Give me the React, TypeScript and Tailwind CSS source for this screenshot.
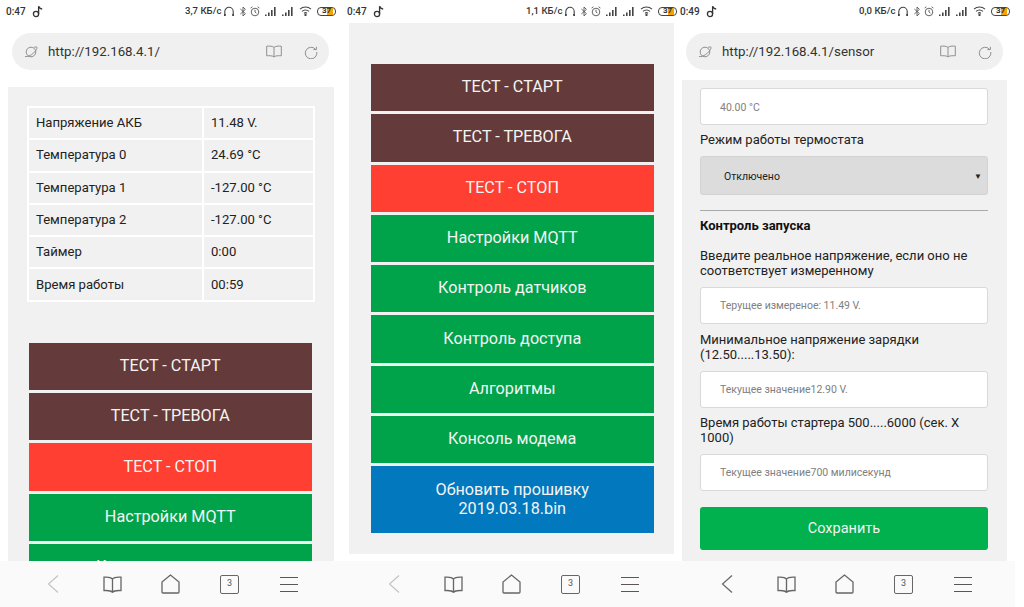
import React from "react";

const Gray = "#8f8f8f";

function Note() {
  return (
    <svg width="12" height="13" viewBox="0 0 12 13" fill="none" stroke="#333" strokeWidth="1.3">
      <circle cx="4" cy="9" r="2.6" />
      <path d="M6.6 9V1.2c.4 1.8 2 2.6 3.6 3" />
    </svg>
  );
}

function Bars({ className = "" }: { className?: string }) {
  return (
    <svg width="13" height="9" viewBox="0 0 13 9" fill="#444" className={className}>
      <rect x="0" y="7.5" width="1.6" height="1.5" />
      <rect x="3" y="5.5" width="1.6" height="3.5" />
      <rect x="6" y="3" width="1.6" height="6" />
      <rect x="9" y="0" width="1.6" height="9" />
    </svg>
  );
}

function StatusIcons({ speed }: { speed: string }) {
  return (
    <div className="flex items-center">
      <span className="w-[36px] whitespace-nowrap text-[9.6px] font-medium text-[#333]">{speed}</span>
      <svg width="10" height="11" viewBox="0 0 10 11" fill="none" stroke="#444" strokeWidth="1.1" className="ml-[3px]">
        <path d="M.8 9V5.5a4.2 4.2 0 0 1 8.4 0V9" />
        <path d="M.8 8v2M9.2 8v2" strokeWidth="2" />
      </svg>
      <svg width="6" height="11" viewBox="0 0 6 11" fill="none" stroke="#555" strokeWidth=".9" className="ml-[6px]">
        <path d="M.4 3l5 4.6L3 10V1l2.4 2.4L.4 8" />
      </svg>
      <svg width="10" height="11" viewBox="0 0 10 11" fill="none" stroke="#555" strokeWidth=".9" className="ml-[4px]">
        <circle cx="5" cy="6" r="3.8" />
        <path d="M5 3.8V6l1.4 1M.6 2L2.4.8M9.4 2L7.6.8" />
      </svg>
      <Bars className="ml-[5px]" />
      <Bars className="ml-[4px] -mr-[1px]" />
      <svg width="13" height="10" viewBox="0 0 13 10" fill="none" stroke="#444" strokeWidth="1.1" className="ml-[5px]">
        <path d="M1 3.2a8 8 0 0 1 11 0M3 5.4a5 5 0 0 1 7 0M5 7.4a2.2 2.2 0 0 1 3 0" />
        <circle cx="6.5" cy="9" r=".6" fill="#444" />
      </svg>
      <div className="relative ml-[5px] flex h-[9px] w-[19px] items-center justify-center overflow-hidden rounded-[4px] border border-[#444]">
        <div className="absolute bottom-0 left-[9px] top-0 w-[6px] bg-[#f5a300]" />
        <span className="relative text-[8px] font-bold leading-none text-[#333]">37</span>
      </div>
    </div>
  );
}

function UrlBar({ url }: { url: string }) {
  return (
    <div className="mx-[12px] mt-[10px] flex h-[37px] items-center rounded-[19px] bg-[#f0f0f0] pl-[12px] pr-[11px]">
      <svg width="14" height="14" viewBox="0 0 14 14" fill="none" stroke={Gray} strokeWidth="1">
        <circle cx="7" cy="7" r="4.8" />
        <path d="M1 11.5c2 .6 6-1 8.5-3.4S13.6 3 13 2.2c-.4-.5-1.6-.3-2.8.2" />
      </svg>
      <span className="ml-[10px] flex-1 text-[13.3px] text-[#333]">{url}</span>
      <svg width="16" height="13" viewBox="0 0 16 13" fill="none" stroke={Gray} strokeWidth="1">
        <path d="M8 2.5C7 1 3 1 .7 1.2v9.6C3 10.6 7 10.6 8 12c1-1.4 5-1.4 7.3-1.2V1.2C13 1 9 1 8 2.5zM8 2.5V12" />
      </svg>
      <svg width="14" height="14" viewBox="0 0 14 14" fill="none" stroke={Gray} strokeWidth="1" className="ml-[22px]">
        <path d="M11.6 4.4A5.8 5.8 0 1 0 12.8 7" />
        <path d="M9.4 4.6h3V1.8" />
      </svg>
    </div>
  );
}

function BottomNav({ backColor }: { backColor: string }) {
  return (
    <div className="flex h-[46px] w-[341px] shrink-0 items-center bg-[#fafafa] pl-[47px]">
      <div className="w-[56px]">
        <svg width="13" height="20" viewBox="0 0 13 20" fill="none" stroke={backColor} strokeWidth="1.2">
          <path d="M11 1.5L1.5 10l9.5 8.5" />
        </svg>
      </div>
      <div className="w-[58px]">
        <svg width="19" height="17" viewBox="0 0 19 17" fill="none" stroke="#666" strokeWidth="1.3">
          <path d="M9.5 3C8 1.2 3.5 1 1 1.2v13.4c2.5-.2 7 0 8.5 1.6 1.5-1.6 6-1.8 8.5-1.6V1.2C15.5 1 11 1.2 9.5 3zM9.5 3v13" />
        </svg>
      </div>
      <div className="w-[59px]">
        <svg width="19" height="20" viewBox="0 0 19 20" fill="none" stroke="#666" strokeWidth="1.3">
          <path d="M9.5 1L1 8v10a1 1 0 0 0 1 1h15a1 1 0 0 0 1-1V8z" />
        </svg>
      </div>
      <div className="w-[60px]">
        <div className="flex h-[19px] w-[19px] items-center justify-center rounded-[2px] border border-[#666] text-[9px] text-[#555]">
          3
        </div>
      </div>
      <div className="flex flex-col gap-[6px]">
        <div className="h-px w-[18px] bg-[#5c5555]" />
        <div className="h-px w-[18px] bg-[#5c5555]" />
        <div className="h-px w-[18px] bg-[#5c5555]" />
      </div>
    </div>
  );
}

function Phone({ time, speed, children }: { time: string; speed: string; children: React.ReactNode }) {
  return (
    <div className="flex h-[607px] w-[341px] shrink-0 flex-col">
      <div className="flex h-[23px] shrink-0 items-center justify-between pl-[6px] pr-[5px] text-[10px] font-medium text-[#333]">
        <div className="flex items-center gap-[6px]">
          <span>{time}</span>
          <Note />
        </div>
        <StatusIcons speed={speed} />
      </div>
      {children}
    </div>
  );
}

const tone: Record<string, string> = {
  brown: "bg-[#643b3a]",
  red: "bg-[#ff3f31]",
  green: "bg-[#00a24a]",
  blue: "bg-[#0278be]",
};

function Btn({ label, color, tall }: { label: React.ReactNode; color: string; tall?: boolean }) {
  return (
    <div
      className={`${tone[color]} ${tall ? "h-[67px]" : "h-[47.3px]"} flex shrink-0 items-center justify-center pb-[2px] text-center text-[16.2px] leading-[19px] text-[#f4f4f4]`}
    >
      {label}
    </div>
  );
}

const rows = [
  ["Напряжение АКБ", "11.48 V."],
  ["Температура 0", "24.69 °C"],
  ["Температура 1", "-127.00 °C"],
  ["Температура 2", "-127.00 °C"],
  ["Таймер", "0:00"],
  ["Время работы", "00:59"],
];

function Field({ text }: { text: string }) {
  return (
    <div className="flex h-[37px] shrink-0 items-center rounded-[3px] border border-[#d9d9d9] bg-white pl-[19px] pt-[2px] text-[10.5px] text-[#808080]">
      {text}
    </div>
  );
}

function Label({ children, className = "" }: { children: React.ReactNode; className?: string }) {
  return <div className={`text-[13px] leading-[15.5px] text-[#222] ${className}`}>{children}</div>;
}

export default function App() {
  return (
    <div className="flex h-[607px] w-[1024px] overflow-hidden bg-white font-['Roboto',sans-serif]">
      <Phone time="0:47" speed="3,7 КБ/с">
        <UrlBar url="http://192.168.4.1/" />
        <div className="mx-[8px] mt-[17px] w-[326px] flex-1 overflow-hidden bg-[#f1f1f1] px-[19px] pt-[19px]">
          <div className="w-[288px] border-2 border-white bg-white">
            <div className="grid grid-cols-[173px_1fr] gap-[2px]">
              {rows.map((r) => (
                <React.Fragment key={r[0]}>
                  <div className="flex h-[30.3px] items-center bg-[#f1f1f1] pb-[0.5px] pl-[7px] text-[13.1px] text-[#222]">{r[0]}</div>
                  <div className="flex h-[30.3px] items-center bg-[#f1f1f1] pb-[0.5px] pl-[7px] text-[13.1px] text-[#222]">{r[1]}</div>
                </React.Fragment>
              ))}
            </div>
          </div>
          <div className="ml-[2px] mt-[41px] flex w-[282.5px] flex-col gap-[3px]">
            <Btn label="ТЕСТ - СТАРТ" color="brown" />
            <Btn label="ТЕСТ - ТРЕВОГА" color="brown" />
            <Btn label="ТЕСТ - СТОП" color="red" />
            <Btn label="Настройки MQTT" color="green" />
            <Btn label="Контроль датчиков" color="green" />
          </div>
        </div>
        <BottomNav backColor="#c4c4c4" />
      </Phone>

      <div className="-mr-[8px] shrink-0">
        <Phone time="0:47" speed="1,1 КБ/с">
          <div className="mx-[8px] flex h-[531px] w-[325px] shrink-0 flex-col gap-[3px] bg-[#f1f1f1] pl-[22px] pr-[20.5px] pt-[41px]">
            <Btn label="ТЕСТ - СТАРТ" color="brown" />
            <Btn label="ТЕСТ - ТРЕВОГА" color="brown" />
            <Btn label="ТЕСТ - СТОП" color="red" />
            <Btn label="Настройки MQTT" color="green" />
            <Btn label="Контроль датчиков" color="green" />
            <Btn label="Контроль доступа" color="green" />
            <Btn label="Алгоритмы" color="green" />
            <Btn label="Консоль модема" color="green" />
            <Btn
              label={
                <span>
                  Обновить прошивку
                  <br />
                  2019.03.18.bin
                </span>
              }
              color="blue"
              tall
            />
          </div>
          <div className="flex-1" />
          <BottomNav backColor="#c4c4c4" />
        </Phone>
      </div>

      <Phone time="0:49" speed="0,0 КБ/с">
        <UrlBar url="http://192.168.4.1/sensor" />
        <div className="mx-[8px] mt-[10px] flex w-[325px] flex-1 flex-col overflow-hidden bg-[#f1f1f1] pl-[18px] pr-[19px] pt-[8px]">
          <Field text="40.00 °C" />
          <Label className="mt-[7px]">Режим работы термостата</Label>
          <div className="mt-[8px] flex h-[39px] shrink-0 items-center justify-between rounded-[3px] border border-[#d2d2d2] bg-[#dcdcdc] pl-[23px] pr-[5px] pt-[3px] text-[10.5px] text-[#222]">
            <span>Отключено</span>
            <span className="text-[8px] text-[#222]">▼</span>
          </div>
          <div className="mt-[15px] h-px shrink-0 bg-[#a9a9a9]" />
          <div className="mt-[7px] text-[13px] font-bold leading-[15px] text-[#111]">Контроль запуска</div>
          <Label className="mt-[15px]">Введите реальное напряжение, если оно не соответствует измеренному</Label>
          <div className="mt-[8px]">
            <Field text="Терущее измереное: 11.49 V." />
          </div>
          <Label className="mt-[8px]">Минимальное напряжение зарядки (12.50.....13.50):</Label>
          <div className="mt-[8px]">
            <Field text="Текущее значение12.90 V." />
          </div>
          <Label className="mt-[7px]">Время работы стартера 500.....6000 (сек. Х 1000)</Label>
          <div className="mt-[8px]">
            <Field text="Текущее значение700 милисекунд" />
          </div>
          <div className="mt-[16px] flex h-[43px] shrink-0 items-center justify-center rounded-[3px] bg-[#00b14e] pt-[2px] text-[14.5px] text-[#f2f2f2]">
            Сохранить
          </div>
        </div>
        <BottomNav backColor="#666" />
      </Phone>
    </div>
  );
}
